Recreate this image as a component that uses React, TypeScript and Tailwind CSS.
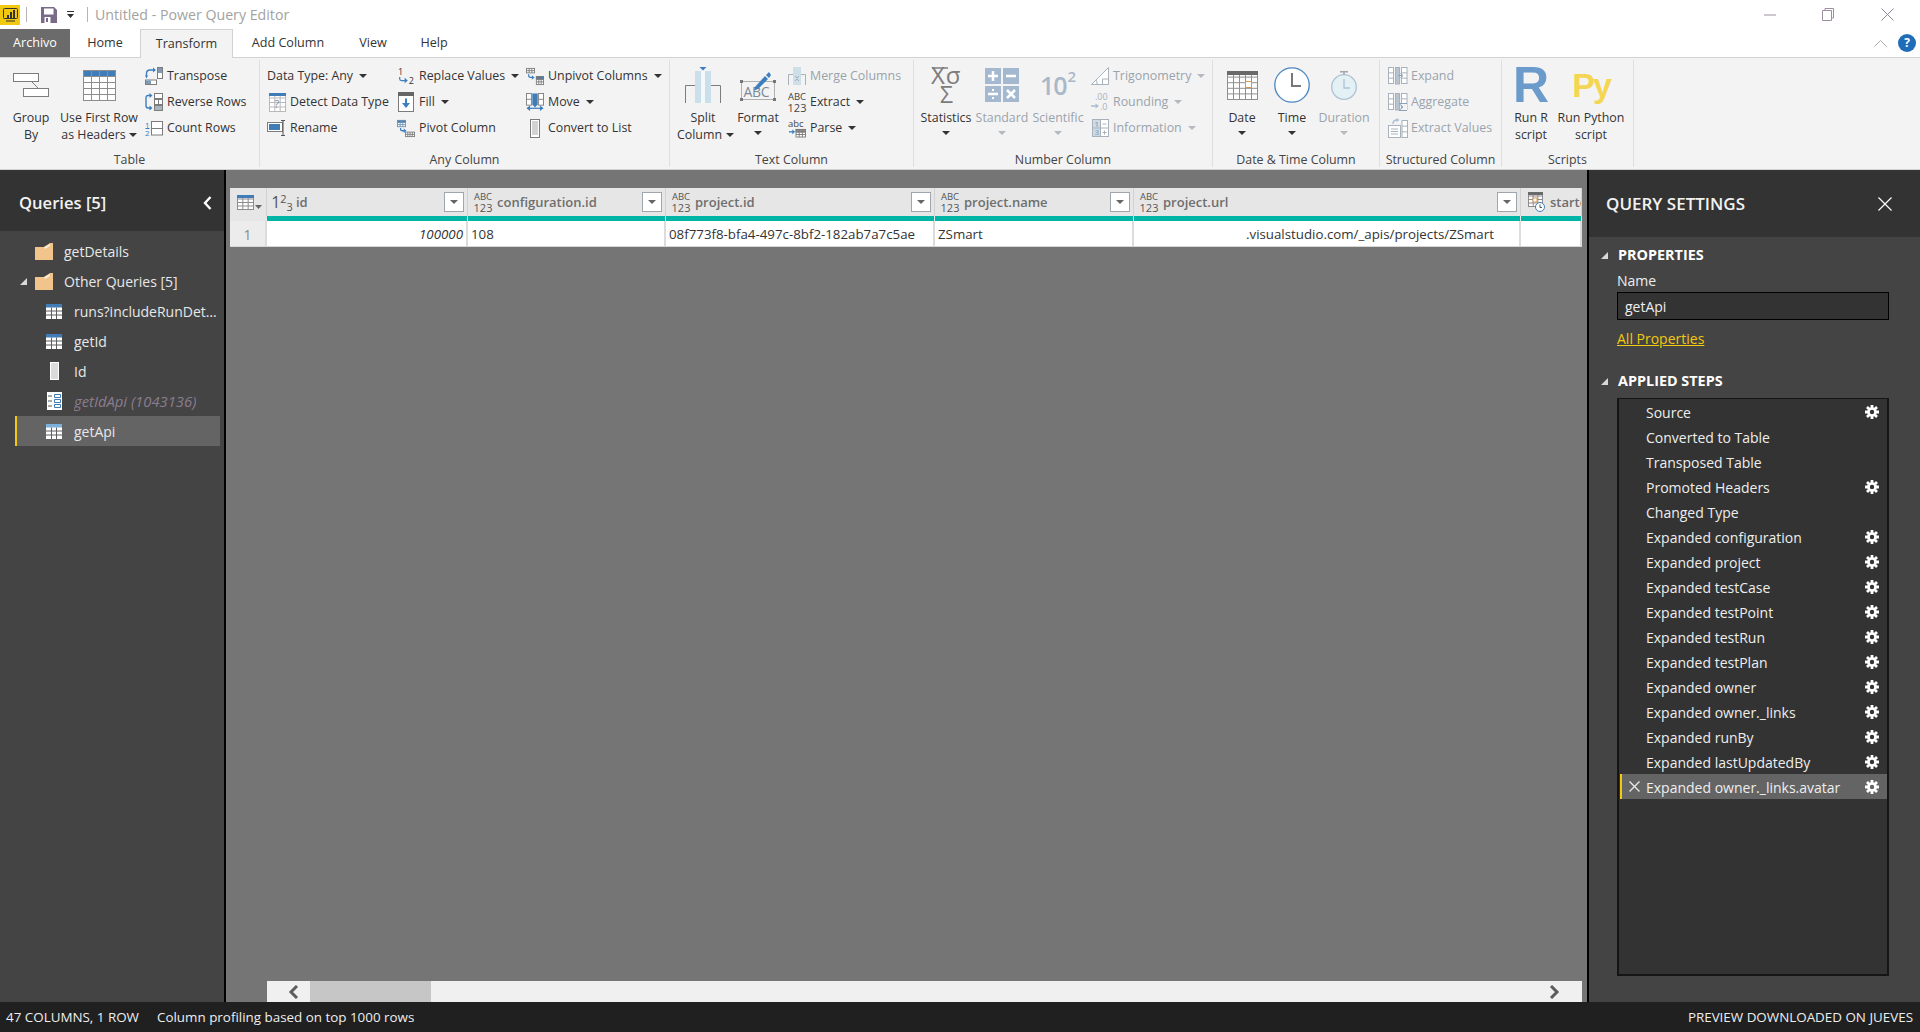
import React from 'react'

const G = '#7c7c7c'
const B = '#3d7ebf'
const DG = '#a8b2bc'
const DB = '#a9bdd2'

function Tbl({ x, y, w, h, c, r, head, stroke = G, fill = '#fff' }: { x: number; y: number; w: number; h: number; c: number; r: number; head?: string; stroke?: string; fill?: string }) {
  const lines = []
  for (let i = 1; i < c; i++) lines.push(<line key={'c' + i} x1={x + (w * i) / c} y1={y} x2={x + (w * i) / c} y2={y + h} stroke={stroke} strokeWidth="1" />)
  for (let i = 1; i < r; i++) lines.push(<line key={'r' + i} x1={x} y1={y + (h * i) / r} x2={x + w} y2={y + (h * i) / r} stroke={stroke} strokeWidth="1" />)
  return (
    <g>
      <rect x={x} y={y} width={w} height={h} fill={fill} stroke={stroke} />
      {head && <rect x={x} y={y} width={w} height={h / r} fill={head} stroke={stroke} />}
      {lines}
    </g>
  )
}

function Caret({ dim, color }: { dim?: boolean; color?: string }) {
  return (
    <svg width="8" height="4" viewBox="0 0 8 4" className="shrink-0">
      <path d="M0 0h8L4 4z" fill={color || (dim ? '#b4bac0' : '#333')} />
    </svg>
  )
}

const Arrow = ({ d, head, color = B }: { d: string; head: string; color?: string }) => (
  <g>
    <path d={d} fill="none" stroke={color} strokeWidth="1.4" />
    <path d={head} fill={color} />
  </g>
)

const GroupByIcon = () => (
  <svg width="36" height="24" viewBox="0 0 36 24">
    <rect x="0.5" y="0.5" width="25" height="8" fill="#fff" stroke={G} />
    <rect x="10.5" y="15.5" width="25" height="8" fill="#fff" stroke={G} />
    <path d="M19 9l6 6" stroke={G} />
  </svg>
)
const FirstRowIcon = () => (
  <svg width="33" height="31" viewBox="0 0 33 31">
    <Tbl x={0.5} y={0.5} w={32} h={30} c={4} r={5} head="#3f7cb8" stroke="#8d8d8d" />
  </svg>
)
const TransposeIcon = () => (
  <svg width="18" height="18" viewBox="0 0 18 18">
    <rect x="12.5" y="0.5" width="5" height="11" fill="#fff" stroke={G} />
    <rect x="13" y="1" width="4" height="5" fill="#7f9ab5" />
    <rect x="0.5" y="13" width="11" height="4.5" fill="#fff" stroke={G} />
    <rect x="1" y="13.5" width="5" height="3.5" fill="#7f9ab5" />
    <Arrow d="M1.5 9V6.5Q1.5 3 5 3H8.5" head="M8 0.5L11 3L8 5.5zM0 8.5h3L1.5 11.5z" />
  </svg>
)
const ReverseIcon = () => (
  <svg width="18" height="18" viewBox="0 0 18 18">
    <rect x="9.5" y="0.5" width="8" height="5" fill="#fff" stroke={G} />
    <rect x="9.5" y="6.5" width="8" height="5" fill="#fff" stroke={G} />
    <path d="M13.5 6.5v5" stroke={G} />
    <rect x="9.5" y="12.5" width="8" height="5" fill="#a9b4be" stroke={G} />
    <Arrow d="M5 2.5H3Q1 2.5 1 5V12.500Q1 15 3 15H5" head="M4.500 0L7.500 2.500L4.500 5zM4.500 12.500L7.500 15L4.500 17.500z" />
  </svg>
)
const CountIcon = () => (
  <svg width="18" height="15" viewBox="0 0 18 15">
    <text x="0" y="7" fontSize="8" fill={B} fontFamily="Open Sans, sans-serif">1</text>
    <text x="0" y="15" fontSize="8" fill={B} fontFamily="Open Sans, sans-serif">2</text>
    <path d="M0.500 7.500H4.500" stroke={B} />
    <rect x="6.500" y="0.500" width="11" height="13.500" fill="#fff" stroke={G} />
    <path d="M6.500 7.500H17.500" stroke={G} />
  </svg>
)
const DetectIcon = () => (
  <svg width="17" height="19" viewBox="0 0 17 19">
    <Tbl x={0.5} y={0.5} w={16} h={18} c={3} r={4} stroke="#b9b9b9" />
    <rect x="0" y="0" width="17" height="3" fill="#3f7cb8" />
    <text x="5.500" y="15" fontSize="11" fill="#6f8dab" fontFamily="Open Sans, sans-serif">?</text>
  </svg>
)
const RenameIcon = () => (
  <svg width="19" height="16" viewBox="0 0 19 16">
    <rect x="0.500" y="2.500" width="15" height="9" fill="#fff" stroke={G} />
    <rect x="2" y="4" width="11" height="6" fill="#3f7cb8" />
    <path d="M14 0.500h4M14 15.500h4M16 0.500v15" stroke="#555" fill="none" />
  </svg>
)
const ReplaceIcon = () => (
  <svg width="20" height="19" viewBox="0 0 20 19">
    <text x="1" y="8" fontSize="10" fill="#333" fontFamily="Open Sans, sans-serif">1</text>
    <text x="13" y="18" fontSize="10" fill="#333" fontFamily="Open Sans, sans-serif">2</text>
    <Arrow d="M3 10v2Q3 14 5 14H9" head="M8.500 11L12 14L8.500 17z" />
  </svg>
)
const FillIcon = () => (
  <svg width="16" height="20" viewBox="0 0 16 20">
    <rect x="0.500" y="0.500" width="15" height="19" fill="#fff" stroke={G} />
    <rect x="0" y="0" width="16" height="4" fill="#666" />
    <path d="M8 6.500v7" stroke={B} strokeWidth="2" />
    <path d="M4 11h8l-4 5z" fill={B} />
  </svg>
)
const PivotIcon = () => (
  <svg width="20" height="19" viewBox="0 0 20 19">
    <Tbl x={0.500} y={0.500} w={9} h={7} c={3} r={3} head="#3f7cb8" stroke="#6f93b5" />
    <Arrow d="M4 9v1.500Q4 12 6 12H8" head="M7.500 9.500L10.500 12L7.500 14.500z" />
    <Tbl x={9.500} y={13.500} w={10} h={5} c={4} r={2} stroke={G} />
  </svg>
)
const UnpivotIcon = () => (
  <svg width="20" height="19" viewBox="0 0 20 19">
    <Tbl x={0.500} y={0.500} w={9} h={5} c={3} r={2} stroke={G} />
    <Arrow d="M3 7v2Q3 10.500 5 10.500H7" head="M6.500 8L9.500 10.500L6.500 13z" />
    <Tbl x={11.500} y={9.500} w={8} h={9} c={3} r={3} head="#3f7cb8" stroke={G} />
  </svg>
)
const MoveIcon = () => (
  <svg width="20" height="20" viewBox="0 0 20 20">
    <Tbl x={0.500} y={0.500} w={5.500} h={13} c={1} r={2} stroke={G} />
    <Tbl x={14} y={0.500} w={5.500} h={13} c={1} r={2} stroke={G} />
    <rect x="7" y="0.500" width="6" height="13" fill="#3f7cb8" />
    <path d="M2 17h16" stroke={B} strokeWidth="1.400" />
    <path d="M4.500 14L0.500 17L4.500 20zM15.500 14L19.500 17L15.500 20zM7.500 13h5L10 16z" fill={B} />
  </svg>
)
const ListIcon = () => (
  <svg width="10" height="19" viewBox="0 0 10 19">
    <rect x="0.500" y="0.500" width="9" height="18" fill="#fff" stroke={G} />
    <path d="M2 3h6M2 5h6M2 7h6M2 9h6M2 11h6M2 13h6M2 15h6" stroke="#a6a6a6" />
  </svg>
)
const SplitIcon = () => (
  <svg width="36" height="36" viewBox="0 0 36 36">
    <path d="M0.500 36V18.500H10.500M35.500 36V18.500H25.500" fill="none" stroke={G} />
    <rect x="10" y="4" width="16" height="32" fill="#c9e0ea" />
    <rect x="16" y="4" width="4" height="32" fill="#f4f8fa" />
    <path d="M14.500 0h7L18 3.500z" fill={B} />
  </svg>
)
const FormatIcon = () => (
  <svg width="36" height="31" viewBox="0 0 36 31">
    <rect x="1.500" y="11.500" width="33" height="18" fill="none" stroke="#b0b0b0" />
    <text x="3.500" y="27" fontSize="14" fill="#7d8a96" fontFamily="Open Sans, sans-serif" letterSpacing="-0.300">ABC</text>
    <path d="M0 10h3v3H0zM33 10h3v3h-3zM0 28h3v3H0zM33 28h3v3h-3z" fill="#777" />
    <path d="M15 17l10-11 3 3-10 10-4 1.500zM26 5l3-3 2 3-2 3z" fill={B} />
  </svg>
)
const MergeIcon = () => (
  <svg width="18" height="18" viewBox="0 0 18 18">
    <path d="M0.500 18V7.500H5M17.500 18V7.500H13" fill="none" stroke={DG} />
    <rect x="5" y="0" width="8" height="18" fill="#cfdfe8" />
    <path d="M7 9l2 2 2-2M7 14l2-2 2 2" stroke="#9cb0c2" fill="none" />
  </svg>
)
const ParseIcon = () => (
  <svg width="19" height="19" viewBox="0 0 19 19">
    <text x="0" y="8" fontSize="10" fill="#444" fontFamily="Open Sans, sans-serif">abc</text>
    <Arrow d="M1 13H5" head="M4.500 10.500L7.500 13L4.500 15.500z" />
    <Tbl x={8.500} y={10.500} w={10} h={8} c={3} r={3} head="#8d8d8d" stroke={G} />
  </svg>
)
const StatsIcon = () => (
  <svg className="ml-[3px]" width="34" height="37" viewBox="0 0 34 37">
    <path d="M1 1H17" stroke={G} strokeWidth="1.500" />
    <text x="0" y="17" fontSize="24" fill={G} fontFamily="Open Sans, sans-serif" letterSpacing="1">Xσ</text>
    <text x="9" y="36" fontSize="23" fill={G} fontFamily="Open Sans, sans-serif">Σ</text>
  </svg>
)
const StandardIcon = () => (
  <svg width="34" height="34" viewBox="0 0 34 34">
    <rect width="16" height="16" fill="#a4b9d0" />
    <rect x="18" width="16" height="16" fill="#a4b9d0" />
    <rect y="18" width="16" height="16" fill="#a4b9d0" />
    <rect x="18" y="18" width="16" height="16" fill="#a4b9d0" />
    <path d="M3 8h10M8 3v10M21 8h10M3 26h10M22 22l8 8M30 22l-8 8" stroke="#fff" strokeWidth="2.500" />
    <path d="M7 21h2v2H7zM7 29h2v2H7z" fill="#fff" />
  </svg>
)
const TrigIcon = () => (
  <svg width="18" height="18" viewBox="0 0 18 18">
    <path d="M0.500 17.500L17.500 0.500V17.500z" fill="#fff" stroke={DG} />
    <path d="M11.500 17.500V12H17" fill="none" stroke={DG} />
    <path d="M5 13a5 5 0 0 1 1 4" fill="none" stroke={DG} />
  </svg>
)
const RoundIcon = () => (
  <svg width="18" height="18" viewBox="0 0 18 18">
    <text x="4" y="7" fontSize="9" fill={DG} fontFamily="Open Sans, sans-serif">.00</text>
    <text x="9" y="17" fontSize="9" fill={DG} fontFamily="Open Sans, sans-serif">.0</text>
    <path d="M0 13H5" stroke={DB} strokeWidth="1.500" />
    <path d="M4.500 10.500L8 13L4.500 15.500z" fill={DB} />
  </svg>
)
const InfoIcon = () => (
  <svg width="17" height="18" viewBox="0 0 17 18">
    <rect x="0.500" y="0.500" width="16" height="17" fill="#fff" stroke={DG} />
    <rect x="1" y="1" width="7" height="16" fill="#cddbe8" />
    <path d="M8.500 0.500v17M0.500 9h16" stroke={DG} />
    <text x="2.500" y="8" fontSize="8" fill="#7e94aa" fontFamily="Open Sans, sans-serif">1</text>
    <text x="2.500" y="16" fontSize="8" fill="#7e94aa" fontFamily="Open Sans, sans-serif">3</text>
    <path d="M10.500 5h4M10.500 13.500h4M12.500 11.500v4" stroke={DG} />
  </svg>
)
const DateIcon = () => (
  <svg width="31" height="29" viewBox="0 0 31 29">
    <Tbl x={0.500} y={0.500} w={30} h={28} c={5} r={5} stroke="#8f8f8f" />
    <rect width="31" height="4" fill="#6a6a6a" />
    <rect x="18.500" y="10.500" width="6" height="6" fill="#fff" stroke="#d59a4f" />
  </svg>
)
const TimeIcon = () => (
  <svg width="36" height="36" viewBox="0 0 36 36">
    <circle cx="18" cy="18" r="17.200" fill="#fff" stroke="#4a86c0" strokeWidth="1.300" />
    <path d="M18 6V19H27" fill="none" stroke="#777" strokeWidth="2" />
  </svg>
)
const DurationIcon = () => (
  <svg width="26" height="29" viewBox="0 0 26 29">
    <circle cx="13" cy="16" r="12.300" fill="#e3f0f4" stroke="#aec2d5" strokeWidth="1.300" />
    <path d="M13 8V17H19" fill="none" stroke="#aec2d5" strokeWidth="1.300" />
    <path d="M9 0.800H17M13 1V4" stroke="#9fa9b3" strokeWidth="1.500" />
  </svg>
)
const ExpandIcon = ({ sigma }: { sigma?: boolean }) => (
  <svg width="20" height="18" viewBox="0 0 20 18">
    <Tbl x={0.500} y={0.500} w={5} h={16} c={1} r={3} stroke={DG} />
    <rect x="7.500" y="0.500" width="4" height="16.500" fill="#b7c3cf" stroke={DG} />
    <Tbl x={13.500} y={0.500} w={5.500} h={16} c={1} r={3} stroke={DG} />
    {sigma ? (
      <path d="M19 10.500H11L15 14L11 17.500H19" fill="#f3f3f3" stroke="#8ba3ba" />
    ) : (
      <path d="M10 8.500H14M12.500 6.500L15 8.500L12.500 10.500" fill="none" stroke="#8ba3ba" />
    )}
  </svg>
)
const ExtractValIcon = () => (
  <svg width="20" height="20" viewBox="0 0 20 20">
    <rect x="0.500" y="7.500" width="12" height="12" fill="#fff" stroke={DG} />
    <path d="M3 11h7M3 13.500h7M3 16h7" stroke={DG} />
    <Tbl x={14} y={2.500} w={5.500} h={17} c={1} r={3} stroke={DG} />
    <path d="M5 6Q5 2 9 2" fill="none" stroke={DB} strokeWidth="1.400" />
    <path d="M8.500 0L11.500 2L8.500 4z" fill={DB} />
  </svg>
)

function Large({ className, icon, lines, caret, dim, line2 = 'gap-[3px]' }: { className: string; icon: React.ReactNode; lines: string[]; caret?: boolean; dim?: boolean; line2?: string }) {
  return (
    <div className={`-mt-[2px] flex flex-col items-center whitespace-nowrap leading-[17px] ${dim ? 'text-[#9aa3ac]' : 'text-[#333]'} ${className}`}>
      <div className="flex h-[48px] items-center justify-center">{icon}</div>
      <span>{lines[0]}</span>
      {lines[1] ? (
        <span className={`flex items-center ${line2}`}>
          {lines[1]}
          {caret && <Caret dim={dim} />}
        </span>
      ) : (
        caret && (
          <div className="flex h-[13px] items-center">
            <Caret dim={dim} />
          </div>
        )
      )}
    </div>
  )
}

function Small({ icon, label, caret, dim, slot = 'w-[18px]', gap = 'gap-[4px]' }: { icon?: React.ReactNode; label: string; caret?: boolean; dim?: boolean; slot?: string; gap?: string }) {
  return (
    <div className={`flex h-[26px] items-center whitespace-nowrap ${gap} ${dim ? 'text-[#9aa3ac]' : 'text-[#333]'}`}>
      {icon && <div className={`flex shrink-0 items-center justify-center ${slot}`}>{icon}</div>}
      <span>{label}</span>
      {caret && <span className="ml-[2px]"><Caret dim={dim} /></span>}
    </div>
  )
}

function Group({ className, label, children }: { className: string; label: string; children: React.ReactNode }) {
  return (
    <div className={`flex shrink-0 flex-col border-r border-[#dfdfdf] ${className}`}>
      <div className="flex h-[93px] pt-[3px]">{children}</div>
      <div className="flex h-[14px] items-center justify-center whitespace-nowrap text-[#444]">{label}</div>
    </div>
  )
}

function AbcStack({ top = '#444', bottom = '#444' }: { top?: string; bottom?: string }) {
  return (
    <div className="flex w-[18px] flex-col items-center font-['Open_Sans',sans-serif]">
      <span className="text-[9.5px] leading-[10px]" style={{ color: top }}>ABC</span>
      <span className="text-[11px] leading-[11px]" style={{ color: bottom }}>123</span>
    </div>
  )
}

function Ribbon() {
  return (
    <div className="flex h-[113px] shrink-0 border-y border-[#d2d2d2] bg-[#f3f3f3] py-[2px] text-[12.4px]">
      <Group className="w-[260px]" label="Table">
        <Large className="w-[62px]" icon={<GroupByIcon />} lines={['Group', 'By']} />
        <Large className="w-[74px]" icon={<FirstRowIcon />} lines={['Use First Row', 'as Headers']} caret />
        <div className="ml-[9px]">
          <Small icon={<TransposeIcon />} label="Transpose" />
          <Small icon={<ReverseIcon />} label="Reverse Rows" />
          <Small icon={<CountIcon />} label="Count Rows" />
        </div>
      </Group>
      <Group className="w-[410px]" label="Any Column">
        <div className="ml-[7px] w-[130px]">
          <Small label="Data Type: Any" caret />
          <Small icon={<DetectIcon />} label="Detect Data Type" slot="w-[19px] justify-end" />
          <Small icon={<RenameIcon />} label="Rename" slot="w-[19px] justify-end" />
        </div>
        <div className="w-[129px]">
          <Small icon={<ReplaceIcon />} label="Replace Values" caret />
          <Small icon={<FillIcon />} label="Fill" caret />
          <Small icon={<PivotIcon />} label="Pivot Column" />
        </div>
        <div>
          <Small icon={<UnpivotIcon />} label="Unpivot Columns" caret />
          <Small icon={<MoveIcon />} label="Move" caret />
          <Small icon={<ListIcon />} label="Convert to List" />
        </div>
      </Group>
      <Group className="w-[244px]" label="Text Column">
        <Large className="w-[66px]" icon={<SplitIcon />} lines={['Split', 'Column']} caret line2="ml-[5px] gap-[4px]" />
        <Large className="w-[44px]" icon={<FormatIcon />} lines={['Format']} caret />
        <div className="ml-[8px]">
          <Small icon={<MergeIcon />} label="Merge Columns" dim />
          <Small icon={<AbcStack />} label="Extract" caret />
          <Small icon={<ParseIcon />} label="Parse" caret />
        </div>
      </Group>
      <Group className="w-[299px]" label="Number Column">
        <Large className="w-[64px]" icon={<StatsIcon />} lines={['Statistics']} caret />
        <Large className="w-[48px]" icon={<StandardIcon />} lines={['Standard']} caret dim />
        <Large
          className="w-[64px]"
          icon={
            <span className="flex items-start leading-none font-semibold text-[#a9b8c9]">
              <span className="text-[25px] leading-[26px] tracking-[-1px]">10</span>
              <span className="-mt-[3px] ml-px text-[15px] leading-[15px]">2</span>
            </span>
          }
          lines={['Scientific']}
          caret
          dim
        />
        <div className="ml-px">
          <Small icon={<TrigIcon />} label="Trigonometry" caret dim />
          <Small icon={<RoundIcon />} label="Rounding" caret dim />
          <Small icon={<InfoIcon />} label="Information" caret dim />
        </div>
      </Group>
      <Group className="w-[167px]" label="Date & Time Column">
        <Large className="w-[58px]" icon={<DateIcon />} lines={['Date']} caret />
        <Large className="w-[42px]" icon={<TimeIcon />} lines={['Time']} caret />
        <Large className="w-[62px]" icon={<DurationIcon />} lines={['Duration']} caret dim />
      </Group>
      <Group className="w-[122px]" label="Structured Column">
        <div className="ml-[8px]">
          <Small icon={<ExpandIcon />} label="Expand" dim gap="gap-[3px]" slot="w-[20px]" />
          <Small icon={<ExpandIcon sigma />} label="Aggregate" dim gap="gap-[3px]" slot="w-[20px]" />
          <Small icon={<ExtractValIcon />} label="Extract Values" dim gap="gap-[3px]" slot="w-[20px]" />
        </div>
      </Group>
      <Group className="w-[132px]" label="Scripts">
        <Large
          className="w-[58px]"
          icon={<span className="font-['Liberation_Sans',sans-serif] text-[50px] leading-none font-bold text-[#6a9bca]">R</span>}
          lines={['Run R', 'script']}
        />
        <Large
          className="w-[62px]"
          icon={<span className="font-['Liberation_Sans',sans-serif] text-[34px] leading-none font-bold tracking-[-2px] text-[#f5d654]">Py</span>}
          lines={['Run Python', 'script']}
        />
      </Group>
    </div>
  )
}

function TitleBar() {
  return (
    <div className="flex h-[29px] shrink-0 items-center bg-white">
      <div className="flex h-[20px] w-[20px] items-center justify-center bg-[#f2c811]">
        <svg width="15" height="14" viewBox="0 0 15 14">
          <rect x="0.500" y="0.500" width="14" height="10" rx="1" fill="none" stroke="#333" />
          <path d="M4 11V7h2v4zM7 11V4h2v7zM10 11V2h2v9z" fill="#333" />
          <path d="M3 13h9" stroke="#333" />
        </svg>
      </div>
      <div className="ml-[6px] h-[15px] w-px bg-[#b5b5b5]" />
      <svg className="ml-[14px]" width="16" height="16" viewBox="0 0 16 16">
        <path d="M0 0h13l3 3v13H0z" fill="#7b6a87" />
        <rect x="3" y="1.500" width="9.500" height="6" fill="#fff" />
        <rect x="3.500" y="10" width="6" height="6" fill="#fff" />
        <rect x="5" y="11" width="2" height="4" fill="#7b6a87" />
      </svg>
      <svg className="ml-[10px]" width="7" height="7" viewBox="0 0 7 7">
        <path d="M0 0h7v1H0zM0 3h7L3.500 7z" fill="#333" />
      </svg>
      <div className="ml-[13px] h-[15px] w-px bg-[#b5b5b5]" />
      <span className="ml-[7px] text-[14.2px] text-[#a2a2a2]">Untitled - Power Query Editor</span>
      <svg className="ml-auto mr-[46px]" width="12" height="2" viewBox="0 0 12 2">
        <path d="M0 1h12" stroke="#9b8f9f" />
      </svg>
      <svg className="mr-[47px]" width="12" height="13" viewBox="0 0 12 13">
        <path d="M3 2.500V0.500H11.500V10H9.500M0.500 2.500H9.500V12.500H0.500z" fill="none" stroke="#9b8f9f" />
      </svg>
      <svg className="mr-[26px]" width="13" height="13" viewBox="0 0 13 13">
        <path d="M0.500 0.500l12 12M12.500 0.500l-12 12" stroke="#8f8795" />
      </svg>
    </div>
  )
}

function Tabs() {
  return (
    <div className="flex h-[28px] shrink-0 bg-white text-[12.6px] text-[#333]">
      <div className="flex w-[70px] items-center justify-center bg-[#6b6b6b] text-white">Archivo</div>
      <div className="flex w-[70px] items-center justify-center">Home</div>
      <div className="z-10 -mb-px flex w-[93px] items-center justify-center border-x border-t border-[#d2d2d2] bg-[#f3f3f3]">Transform</div>
      <div className="flex w-[110px] items-center justify-center">Add Column</div>
      <div className="flex w-[60px] items-center justify-center">View</div>
      <div className="flex w-[62px] items-center justify-center">Help</div>
      <div className="ml-auto flex items-center pr-[4px]">
        <svg width="13" height="8" viewBox="0 0 13 8" className="mr-[11px]">
          <path d="M0.500 7.500l6-6 6 6" fill="none" stroke="#aaa" />
        </svg>
        <div className="flex h-[18px] w-[18px] items-center justify-center rounded-full bg-[#1f6cb8] text-[12px] font-bold text-white">?</div>
      </div>
    </div>
  )
}

const FolderIcon = () => (
  <svg width="18" height="17" viewBox="0 0 18 17">
    <path d="M0 4h9l6-4h3v17H0z" fill="#f0c48a" />
    <path d="M9 4l6-3v2l-5 3z" fill="#fff" opacity="0.700" />
  </svg>
)
const QueryTable = ({ light }: { light?: boolean }) => (
  <svg width="16" height="15" viewBox="0 0 16 15">
    <rect width="16" height="15" fill="#fff" />
    <rect width="16" height="3.500" fill={light ? '#7db0dc' : '#3f7cb8'} />
    <path d="M5.500 3.500V15M10.500 3.500V15M0 7h16M0 11h16" stroke="#5f5f5f" />
  </svg>
)
const QueryColumn = () => (
  <svg width="9" height="18" viewBox="0 0 9 18">
    <rect width="9" height="18" fill="#fff" />
    <path d="M1 2h7M1 4h7M1 6h7M1 8h7M1 10h7M1 12h7M1 14h7M1 16h7" stroke="#b8b8b8" />
  </svg>
)
const QueryFunc = () => (
  <svg width="15" height="18" viewBox="0 0 15 18">
    <rect width="15" height="18" fill="#fff" />
    <path d="M1 4h4M1 9h4M1 14h4" stroke="#555" />
    <path d="M7.500 2.500h6v3h-6zM7.500 7.500h6v3h-6zM7.500 12.500h6v3h-6z" fill="none" stroke="#3f7cb8" />
  </svg>
)

function QueryRow({ icon, label, sel, italic }: { icon: React.ReactNode; label: string; sel?: boolean; italic?: boolean }) {
  return (
    <div className={`ml-[15px] flex h-[30px] w-[205px] items-center border-l-2 pl-[29px] ${sel ? 'border-[#f2c811] bg-[#646464]' : 'border-transparent'}`}>
      <div className="flex w-[16px] shrink-0 justify-center">{icon}</div>
      <span className={`ml-[12px] truncate ${italic ? 'text-[14.8px] text-[#8b7d8e] italic' : 'text-[#e8e8e8]'}`}>{label}</span>
    </div>
  )
}

function FolderRow({ label, open }: { label: string; open?: boolean }) {
  return (
    <div className="ml-[15px] flex h-[30px] w-[205px] items-center pl-[5px]">
      <div className="w-[15px]">
        {open && (
          <svg width="7" height="7" viewBox="0 0 7 7">
            <path d="M7 0V7H0z" fill="#d8d8d8" />
          </svg>
        )}
      </div>
      <FolderIcon />
      <span className="ml-[11px] whitespace-nowrap text-[#e8e8e8]">{label}</span>
    </div>
  )
}

function QueriesPanel() {
  return (
    <div className="flex w-[226px] shrink-0 flex-col border-r-2 border-black bg-[#444] text-[14px]">
      <div className="flex h-[61px] shrink-0 items-center justify-between bg-[#333] pt-[5px] pl-[19px] pr-[12px]">
        <span className="text-[16.6px] font-semibold text-[#f2f2f2]">Queries [5]</span>
        <svg width="9" height="14" viewBox="0 0 9 14">
          <path d="M7.500 1L2 7l5.500 6" fill="none" stroke="#fff" strokeWidth="2.400" />
        </svg>
      </div>
      <div className="pt-[5px]">
        <FolderRow label="getDetails" />
        <FolderRow label="Other Queries [5]" open />
        <QueryRow icon={<QueryTable />} label="runs?includeRunDetails=true" />
        <QueryRow icon={<QueryTable />} label="getId" />
        <QueryRow icon={<QueryColumn />} label="Id" />
        <QueryRow icon={<QueryFunc />} label="getIdApi (1043136)" italic />
        <QueryRow icon={<QueryTable light />} label="getApi" sel />
      </div>
    </div>
  )
}

function ColHead({ label, type, noFilter }: { label: string; type: React.ReactNode; noFilter?: boolean }) {
  return (
    <div className="flex items-center overflow-hidden border-r border-[#d2d2d2] pl-[3px]">
      <div className="flex w-[24px] shrink-0 justify-center">{type}</div>
      <span className="ml-[2px] whitespace-nowrap pt-px text-[13px] font-semibold text-[#6e6e6e]">{label}</span>
      {!noFilter && (
        <div className="ml-auto mr-[3px] flex h-[20px] w-[20px] shrink-0 items-center justify-center border border-[#9fa6ad] bg-white">
          <Caret color="#666" />
        </div>
      )}
    </div>
  )
}

const Abc = () => <AbcStack top="#555" bottom="#555" />
const Teal = () => <div className="border-r border-[#e8e8e8] bg-[#00b5a5]" />
const DataCell = ({ children, className = '' }: { children?: React.ReactNode; className?: string }) => (
  <div className={`flex items-center overflow-hidden whitespace-nowrap border-r-2 border-[#dcdcdc] px-[3px] pt-[2px] text-[13.3px] text-[#333] ${className}`}>{children}</div>
)

function Table() {
  return (
    <div className="grid grid-cols-[37px_201px_198px_269px_199px_387px_61px] grid-rows-[28px_5px_25px_1px] bg-[#e6e6e6]">
      <div className="flex items-center gap-[1px] border-r border-[#d2d2d2] pl-[7px]">
        <svg width="17" height="15" viewBox="0 0 17 15">
          <Tbl x={0.500} y={0.500} w={16} h={14} c={3} r={4} stroke="#8d8d8d" />
          <rect width="17" height="3" fill="#3f7cb8" />
        </svg>
        <svg className="mt-[9px]" width="7" height="4" viewBox="0 0 7 4">
          <path d="M0 0h7L3.500 4z" fill="#666" />
        </svg>
      </div>
      <ColHead
        label="id"
        type={<span className="text-[16px] leading-none text-[#555]">1<sup className="text-[11px]">2</sup><sub className="text-[11px]">3</sub></span>}
      />
      <ColHead label="configuration.id" type={<Abc />} />
      <ColHead label="project.id" type={<Abc />} />
      <ColHead label="project.name" type={<Abc />} />
      <ColHead label="project.url" type={<Abc />} />
      <ColHead
        label="startedDate"
        noFilter
        type={
          <svg width="17" height="20" viewBox="0 0 17 20">
            <Tbl x={0.500} y={0.500} w={14} h={14} c={3} r={4} stroke="#8d8d8d" />
            <rect width="15" height="3" fill="#6a6a6a" />
            <rect x="5" y="6" width="4" height="4" fill="#fff" stroke="#d59a4f" />
            <circle cx="12" cy="15" r="4.500" fill="#fff" stroke="#3f7cb8" />
            <path d="M12 12.500V15.500H14" fill="none" stroke="#555" />
          </svg>
        }
      />
      <div className="bg-[#e6e6e6]" />
      <Teal />
      <Teal />
      <Teal />
      <Teal />
      <Teal />
      <Teal />
      <div className="flex items-center justify-center border-r-2 border-[#dcdcdc] bg-[#ececec] pt-[2px] text-[14px] text-[#8a8a8a]">1</div>
      <DataCell className="justify-end bg-white italic">100000</DataCell>
      <DataCell className="bg-white">108</DataCell>
      <DataCell className="bg-white">08f773f8-bfa4-497c-8bf2-182ab7a7c5ae</DataCell>
      <DataCell className="bg-white">ZSmart</DataCell>
      <DataCell className="bg-white pl-[112px]">.visualstudio.com/_apis/projects/ZSmart</DataCell>
      <DataCell className="bg-white" />
      <div className="col-span-7 bg-[#d6d6d6]" />
    </div>
  )
}

function GridArea() {
  return (
    <div className="flex min-w-0 flex-1 flex-col bg-[#757575] pl-[4px] pr-[5px]">
      <div className="pt-[18px]">
        <Table />
      </div>
      <div className="mt-auto ml-[37px] flex h-[21px] items-center bg-[#f0f0f0]">
        <svg className="ml-[21px]" width="11" height="14" viewBox="0 0 11 14">
          <path d="M9 1L3 7l6 6" fill="none" stroke="#5c5c5c" strokeWidth="3" />
        </svg>
        <div className="ml-[11px] h-full w-[121px] bg-[#c6c6c6]" />
        <svg className="ml-auto mr-[22px]" width="11" height="14" viewBox="0 0 11 14">
          <path d="M2 1l6 6-6 6" fill="none" stroke="#5c5c5c" strokeWidth="3" />
        </svg>
      </div>
    </div>
  )
}

const Gear = () => (
  <svg width="14" height="14" viewBox="0 0 14 14">
    <circle cx="7" cy="7" r="3.500" fill="none" stroke="#fff" strokeWidth="2.600" />
    <path d="M7 0v3M7 11v3M0 7h3M11 7h3M2 2l2 2M10 10l2 2M12 2l-2 2M4 10l-2 2" stroke="#fff" strokeWidth="2.800" />
  </svg>
)

const steps: [string, boolean][] = [
  ['Source', true],
  ['Converted to Table', false],
  ['Transposed Table', false],
  ['Promoted Headers', true],
  ['Changed Type', false],
  ['Expanded configuration', true],
  ['Expanded project', true],
  ['Expanded testCase', true],
  ['Expanded testPoint', true],
  ['Expanded testRun', true],
  ['Expanded testPlan', true],
  ['Expanded owner', true],
  ['Expanded owner._links', true],
  ['Expanded runBy', true],
  ['Expanded lastUpdatedBy', true],
  ['Expanded owner._links.avatar', true],
]

function SectionHead({ label, className }: { label: string; className: string }) {
  return (
    <div className={`flex h-[22px] items-center gap-[10px] pl-[12px] text-[14.4px] font-bold text-white ${className}`}>
      <svg width="7" height="7" viewBox="0 0 7 7">
        <path d="M7 0V7H0z" fill="#d8d8d8" />
      </svg>
      <span>{label}</span>
    </div>
  )
}

function SettingsPanel() {
  return (
    <div className="flex w-[333px] shrink-0 flex-col border-l-2 border-black bg-[#444] text-[14px] text-[#eee]">
      <div className="flex h-[67px] shrink-0 items-center justify-between bg-[#333] pl-[17px] pr-[28px]">
        <span className="text-[17px] font-semibold text-[#f2f2f2]">QUERY SETTINGS</span>
        <svg width="14" height="14" viewBox="0 0 14 14">
          <path d="M0.500 0.500l13 13M13.500 0.500l-13 13" stroke="#fff" strokeWidth="1.200" />
        </svg>
      </div>
      <SectionHead label="PROPERTIES" className="mt-[7px]" />
      <div className="ml-[28px] w-[272px]">
        <div className="mt-[5px] h-[20px] leading-[20px]">Name</div>
        <div className="mt-px flex h-[28px] items-center border border-black bg-[#333] pl-[7px]">getApi</div>
        <div className="mt-[9px] h-[20px] leading-[20px] text-[#f2c811] underline">All Properties</div>
      </div>
      <SectionHead label="APPLIED STEPS" className="mt-[21px]" />
      <div className="mt-[6px] ml-[28px] h-[578px] w-[272px] border-x-2 border-t border-b-2 border-[#151515] bg-[#333] pl-px">
        {steps.map(([name, gear], i) => {
          const last = i === steps.length - 1
          return (
            <div key={name} className={`flex h-[25px] items-center border-l-2 pr-[8px] ${last ? 'border-[#f2c811] bg-[#646464]' : 'border-transparent'}`}>
              <div className="flex w-[24px] shrink-0 justify-center pl-[1px]">
                {last && (
                  <svg width="11" height="11" viewBox="0 0 11 11">
                    <path d="M0.500 0.500l10 10M10.500 0.500l-10 10" stroke="#e8e8e8" strokeWidth="1.400" />
                  </svg>
                )}
              </div>
              <span className="pt-[2px] whitespace-nowrap">{name}</span>
              {gear && (
                <span className="ml-auto">
                  <Gear />
                </span>
              )}
            </div>
          )
        })}
      </div>
    </div>
  )
}

export default function App() {
  return (
    <div className="flex h-screen w-full flex-col overflow-hidden bg-white font-['Open_Sans',sans-serif]">
      <TitleBar />
      <Tabs />
      <Ribbon />
      <div className="flex min-h-0 flex-1">
        <QueriesPanel />
        <GridArea />
        <SettingsPanel />
      </div>
      <div className="flex h-[30px] shrink-0 items-center justify-between bg-[#202020] px-[6px] pt-[1px] text-[13.4px] text-[#eee]">
        <div className="flex gap-[18px]">
          <span>47 COLUMNS, 1 ROW</span>
          <span>Column profiling based on top 1000 rows</span>
        </div>
        <span className="pr-px">PREVIEW DOWNLOADED ON JUEVES</span>
      </div>
    </div>
  )
}
